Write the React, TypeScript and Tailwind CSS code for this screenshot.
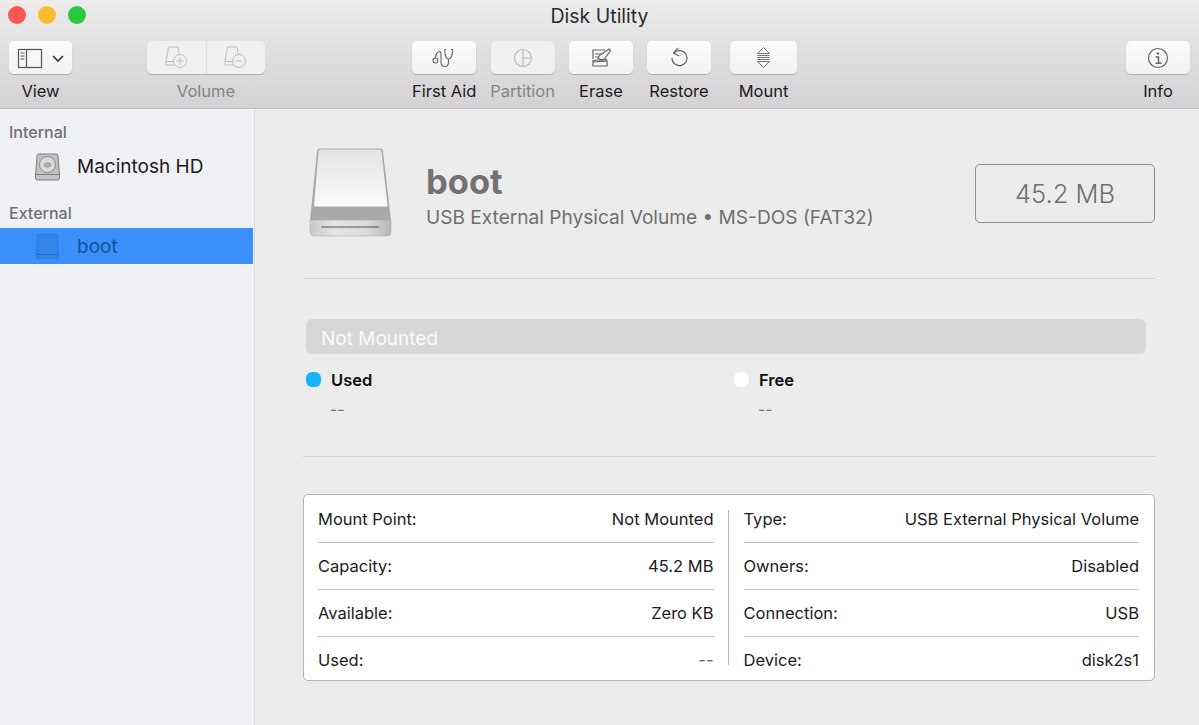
import React from "react";

const font = { fontFamily: "Inter, 'Liberation Sans', sans-serif" };

function ToolBtn({ w, dim, children }: { w: string; dim?: boolean; children: React.ReactNode }) {
  return (
    <div
      className={`${w} h-[33px] rounded-[5px] flex items-center justify-center shadow-[0_1px_1px_rgba(0,0,0,0.22)] ${
        dim ? "bg-[#f0f0f0]" : "bg-gradient-to-b from-[#fbfbfb] to-[#f2f2f2]"
      }`}
    >
      {children}
    </div>
  );
}

function Tool({
  label,
  w,
  dim,
  ml,
  children,
}: {
  label: string;
  w: string;
  dim?: boolean;
  ml: string;
  children: React.ReactNode;
}) {
  return (
    <div className={`flex flex-col items-center ${ml}`}>
      <ToolBtn w={w} dim={dim}>
        {children}
      </ToolBtn>
      <span className={`mt-[8px] text-[16.5px] leading-[18px] whitespace-nowrap ${dim ? "text-[#858585]" : "text-[#1c1c1c]"}`}>
        {label}
      </span>
    </div>
  );
}

function VolumeIcon({ minus }: { minus?: boolean }) {
  return (
    <svg width="23" height="23" viewBox="0 0 23 23" fill="none" stroke="#bdbdbd" strokeWidth="1">
      <path d="M3.5 1h9.5l1.5 9M3.5 1L1 15.5V19h10M1 15.5h9" />
      <circle cx="15" cy="15" r="6.5" fill="#f0f0f0" />
      <path d="M11.5 15h7" />
      {!minus && <path d="M15 11.5v7" />}
    </svg>
  );
}

function Row({ k, v, last }: { k: string; v: string; last?: boolean }) {
  return (
    <div className={`pt-[1px] flex items-center justify-between text-[16.5px] text-[#1c1c1c] ${last ? "h-[45px]" : "h-[47px] border-b border-[#c4c4c4]"}`}>
      <span>{k}</span>
      <span className={v === "--" ? "text-[#666]" : ""}>{v}</span>
    </div>
  );
}

export default function App() {
  return (
    <div className="w-[1199px] h-[725px] overflow-hidden flex flex-col bg-[#ececec]" style={font}>
      {/* Toolbar */}
      <header className="h-[109px] shrink-0 border-b border-[#bdbbbd] bg-gradient-to-b from-[#ececec] to-[#d4d2d4]">
        <div className="h-[31px] relative flex items-center justify-center pt-[2px]">
          <div className="absolute left-[8px] top-[6px] flex gap-[12px]">
            <span className="w-[18px] h-[18px] rounded-full bg-[#fc5753]" />
            <span className="w-[18px] h-[18px] rounded-full bg-[#fdbc2e]" />
            <span className="w-[18px] h-[18px] rounded-full bg-[#28c93f]" />
          </div>
          <span className="text-[19.5px] text-[#2b2b2b]">Disk Utility</span>
        </div>
        <div className="flex items-start pt-[10px] pl-[9px]">
          <Tool label="View" w="w-[63px]" ml="">
            <svg width="54" height="24" viewBox="0 0 54 24" fill="none" stroke="#555" className="ml-[4px]">
              <rect x="2.5" y="3.5" width="23" height="18" strokeWidth="1.2" />
              <path d="M10.5 3.5v18" strokeWidth="1.2" />
              <path d="M4.5 7h4M4.5 10h4M4.5 13h4" strokeWidth="1" />
              <path d="M37 10l5 5 5-5" strokeWidth="1.6" stroke="#333" />
            </svg>
          </Tool>
          <div className="flex flex-col items-center ml-[75px]">
            <div className="w-[118px] h-[33px] rounded-[5px] bg-[#f0f0f0] shadow-[0_1px_1px_rgba(0,0,0,0.22)] flex">
              <div className="flex-1 flex items-center justify-center border-r border-[#dcdcdc]">
                <VolumeIcon />
              </div>
              <div className="flex-1 flex items-center justify-center">
                <VolumeIcon minus />
              </div>
            </div>
            <span className="mt-[8px] text-[16.5px] leading-[18px] text-[#858585]">Volume</span>
          </div>
          <Tool label="First Aid" w="w-[64px]" ml="ml-[147px]">
            <svg width="24" height="20" viewBox="0 0 24 20" fill="none" stroke="#666" strokeWidth="1.1">
              <circle cx="3.5" cy="12.5" r="2.5" />
              <path d="M3.5 10C3.5 4 9 1 9 6v8c0 6 7.5 6 7.5 0v-3" />
              <path d="M14 1.5h-1.2c0 5 1 9.5 3.7 9.5S20.5 6.5 20.5 1.5H19" />
            </svg>
          </Tool>
          <Tool label="Partition" w="w-[64px]" dim ml="ml-[14px]">
            <svg width="20" height="20" viewBox="0 0 20 20" fill="none" stroke="#b8b8b8" strokeWidth="1.1">
              <circle cx="10" cy="10" r="8.5" />
              <path d="M10 1.5v17M10 10h8.5" />
            </svg>
          </Tool>
          <Tool label="Erase" w="w-[64px]" ml="ml-[14px]">
            <svg width="22" height="20" viewBox="0 0 22 20" fill="none" stroke="#666" strokeWidth="1.2">
              <path d="M15 2H3v9M3 14v-1.5L17 11.5M3 14l14-1v5H3v-4z" />
              <path d="M8 10l2-3 9-6 1.5 1.5-6 8.5-3.5 1z" />
              <path d="M5 6h7M5 9h3" strokeWidth="1" />
            </svg>
          </Tool>
          <Tool label="Restore" w="w-[64px]" ml="ml-[14px]">
            <svg width="20" height="22" viewBox="0 0 20 22" fill="none" stroke="#666" strokeWidth="1.2">
              <path d="M5 6a7.5 7.5 0 1 1-2 5" />
              <path d="M9 1L4.5 6 10 9" />
            </svg>
          </Tool>
          <Tool label="Mount" w="w-[67px]" ml="ml-[19px]">
            <svg width="13" height="21" viewBox="0 0 13 21" fill="none" stroke="#777" strokeWidth="1">
              <path d="M0.5 6.5L6.5 0.5 12.5 6.5zM0.5 14.5L6.5 20.5 12.5 14.5z" />
              <path d="M0.5 8.5h12M0.5 10.5h12M0.5 12.5h12" />
            </svg>
          </Tool>
          <Tool label="Info" w="w-[64px]" ml="ml-[329px]">
            <svg width="22" height="22" viewBox="0 0 22 22" fill="none" stroke="#666" strokeWidth="1.2">
              <circle cx="11" cy="11" r="9.5" />
              <circle cx="11" cy="6.5" r="1.2" fill="#666" stroke="none" />
              <path d="M8.5 10H11.5V16M8.5 16.2h6" strokeWidth="1.5" />
            </svg>
          </Tool>
        </div>
      </header>

      <div className="flex flex-1 min-h-0">
        {/* Sidebar */}
        <aside className="w-[255px] shrink-0 border-r border-[#d8d8d8] bg-[#f0f1f4] pt-[13px]">
          <div className="pl-[9px] text-[16px] leading-[20px] font-medium text-[#6f6f72]">Internal</div>
          <div className="flex items-center h-[36px] mt-[7px] pl-[34px]">
            <svg width="27" height="28" viewBox="0 0 27 28">
              <path d="M5 1h17a2 2 0 0 1 2 2l1.5 19v3a2 2 0 0 1-2 2h-20a2 2 0 0 1-2-2v-3L3 3a2 2 0 0 1 2-2z" fill="#c2c2c2" stroke="#7f7f7f" />
              <circle cx="13.5" cy="11.5" r="8" fill="#dadada" stroke="#8a8a8a" />
              <ellipse cx="13.5" cy="12" rx="3.5" ry="2.2" fill="#b0b0b0" stroke="#888" strokeWidth="0.6" />
              <path d="M1.5 21.5h24" stroke="#7f7f7f" />
            </svg>
            <span className="ml-[16px] text-[19px] text-[#1c1c1c]">Macintosh HD</span>
          </div>
          <div className="pl-[9px] mt-[18px] text-[16px] leading-[20px] font-medium text-[#6f6f72]">External</div>
          <div className="flex items-center h-[36px] mt-[5px] w-[253px] bg-[#3a8ffb] pl-[34px]">
            <svg width="27" height="28" viewBox="0 0 27 28">
              <path d="M3.5 2.5h20l1 20v4h-22v-4z" fill="#3484ec" stroke="#2a6cb8" strokeDasharray="1 1" />
              <path d="M2.5 22.5h22" stroke="#2a6cb8" />
            </svg>
            <span className="ml-[16px] pt-[3px] text-[19px] text-[#0f5596]">boot</span>
          </div>
        </aside>

        {/* Main */}
        <main className="flex-1 min-w-0 pl-[48px] pr-[44px] pt-[39px]">
          <div className="h-[131px] border-b border-[#d4d4d4] flex items-start">
            <svg width="84" height="90" viewBox="0 0 84 90" className="ml-[6px] shrink-0">
              <defs>
                <linearGradient id="top" x1="0" y1="0" x2="0" y2="1">
                  <stop offset="0" stopColor="#e4e4e4" />
                  <stop offset="1" stopColor="#fafafa" />
                </linearGradient>
                <linearGradient id="bot" x1="0" y1="0" x2="1" y2="0">
                  <stop offset="0" stopColor="#c9c9c9" />
                  <stop offset="0.3" stopColor="#e4e4e4" />
                  <stop offset="0.7" stopColor="#dadada" />
                  <stop offset="1" stopColor="#b5b5b5" />
                </linearGradient>
              </defs>
              <path d="M11 0.5h60a3 3 0 0 1 3 3l8 69H1l7-69a3 3 0 0 1 3-3z" fill="#a9a9a9" />
              <path d="M11.5 1.5h59a2 2 0 0 1 2 2l6 54a1 1 0 0 1-1 1H6a1 1 0 0 1-1-1l4.5-54a2 2 0 0 1 2-2z" fill="url(#top)" />
              <path d="M1 72h81v12a4 4 0 0 1-4 4H5a4 4 0 0 1-4-4z" fill="url(#bot)" stroke="#aaa" strokeWidth="0.5" />
              <path d="M12 79h58" stroke="#555" strokeWidth="1.2" />
            </svg>
            <div className="ml-[33px] mt-[14px]">
              <div className="text-[34.5px] leading-[40px] font-bold text-[#727272]">boot</div>
              <div className="text-[19.1px] leading-[24px] text-[#6f6f6f] mt-[3px]">USB External Physical Volume • MS-DOS (FAT32)</div>
            </div>
            <div className="ml-auto mt-[16px] w-[180px] h-[59px] pt-[2px] border border-[#8f8f8f] rounded-[5px] flex items-center justify-center text-[25.5px] font-light text-[#6f6f6f]">
              45.2 MB
            </div>
          </div>

          <div className="h-[178px] border-b border-[#d4d4d4] pt-[40px] pl-[3px] pr-[9px]">
            <div className="h-[35px] rounded-[6px] bg-[#d7d7d7] flex items-center pt-[5px] pl-[15px] text-[19px] text-[#fafafa]">Not Mounted</div>
            <div className="flex mt-[15px]">
              <div className="w-[428px]">
                <div className="flex items-center h-[22px]">
                  <span className="w-[15px] h-[15px] rounded-[6px] bg-[#14b6ff] -translate-y-[1px]" />
                  <span className="ml-[10px] text-[16.5px] font-semibold text-[#111]">Used</span>
                </div>
                <div className="pl-[24px] mt-[8px] text-[16px] leading-[20px] text-[#7a7a7a]">--</div>
              </div>
              <div>
                <div className="flex items-center h-[22px]">
                  <span className="w-[15px] h-[15px] rounded-[6px] bg-white -translate-y-[1px]" />
                  <span className="ml-[10px] text-[16.5px] font-semibold text-[#111]">Free</span>
                </div>
                <div className="pl-[24px] mt-[8px] text-[16px] leading-[20px] text-[#7a7a7a]">--</div>
              </div>
            </div>
          </div>

          <div className="mt-[37px] h-[187px] w-[852px] bg-white border border-[#b4b4b4] rounded-[5px] flex pt-[1px]">
            <div className="flex-1 pl-[14px] pr-[14px]">
              <Row k="Mount Point:" v="Not Mounted" />
              <Row k="Capacity:" v="45.2 MB" />
              <Row k="Available:" v="Zero KB" />
              <Row k="Used:" v="--" last />
            </div>
            <div className="w-px mt-[14px] mb-[15px] bg-[#b8b8b8]" />
            <div className="flex-1 pl-[15px] pr-[15px]">
              <Row k="Type:" v="USB External Physical Volume" />
              <Row k="Owners:" v="Disabled" />
              <Row k="Connection:" v="USB" />
              <Row k="Device:" v="disk2s1" last />
            </div>
          </div>
        </main>
      </div>
    </div>
  );
}
